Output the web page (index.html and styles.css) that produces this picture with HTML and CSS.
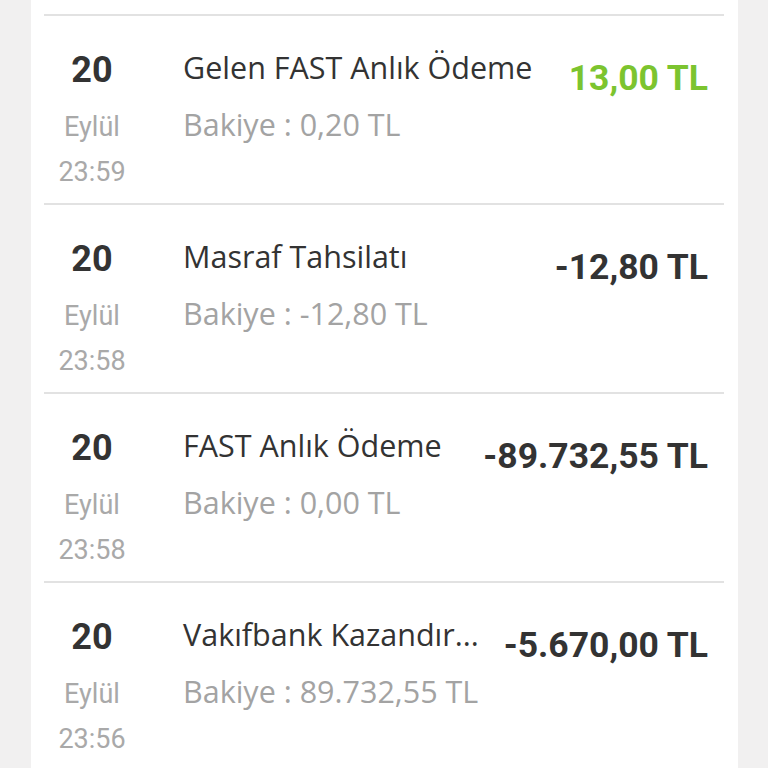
FILE: index.html
```html
<!DOCTYPE html>
<html lang="tr">
<head>
<meta charset="utf-8">
<link rel="stylesheet" href="styles.css">
</head>
<body>
<div class="card">
  <div class="stub"></div>
  <div class="row">
    <div class="date"><div class="day">20</div><div class="month">Eylül</div><div class="time">23:59</div></div>
    <div class="info"><div class="title">Gelen FAST Anlık Ödeme</div><div class="balance">Bakiye : 0,20 TL</div></div>
    <div class="amount positive">13,00 TL</div>
  </div>
  <div class="row">
    <div class="date"><div class="day">20</div><div class="month">Eylül</div><div class="time">23:58</div></div>
    <div class="info"><div class="title">Masraf Tahsilatı</div><div class="balance">Bakiye : -12,80 TL</div></div>
    <div class="amount">-12,80 TL</div>
  </div>
  <div class="row">
    <div class="date"><div class="day">20</div><div class="month">Eylül</div><div class="time">23:58</div></div>
    <div class="info"><div class="title">FAST Anlık Ödeme</div><div class="balance">Bakiye : 0,00 TL</div></div>
    <div class="amount">-89.732,55 TL</div>
  </div>
  <div class="row">
    <div class="date"><div class="day">20</div><div class="month">Eylül</div><div class="time">23:56</div></div>
    <div class="info"><div class="title">Vakıfbank Kazandır...</div><div class="balance">Bakiye : 89.732,55 TL</div></div>
    <div class="amount">-5.670,00 TL</div>
  </div>
</div>
</body>
</html>
```
FILE: styles.css
```css
html, body {
  margin: 0;
  padding: 0;
  background: #f1f0f0;
  height: 768px;
  overflow: hidden;
}
.card {
  margin: 0 30px 0 31px;
  background: #ffffff;
  padding: 0 14px 0 13px;
  height: 768px;
}
.stub {
  height: 14px;
}
.row {
  display: flex;
  align-items: flex-start;
  border-top: 2px solid #e2e2e2;
  height: 187px;
}
.date {
  width: 96px;
  flex: none;
  text-align: center;
  font-family: Roboto, "Liberation Sans", sans-serif;
  padding-top: 34px;
}
.day {
  font-size: 36px;
  font-weight: 700;
  line-height: 40px;
  color: #333333;
}
.month {
  font-size: 27px;
  line-height: 40px;
  color: #a9a9a9;
  margin-top: 17px;
}
.time {
  font-size: 27px;
  line-height: 40px;
  color: #a9a9a9;
  margin-top: 5px;
}
.info {
  flex: 1;
  margin-left: 43px;
  padding-top: 31px;
  font-family: "Open Sans", "Noto Sans", sans-serif;
  min-width: 0;
}
.title {
  font-size: 30.5px;
  line-height: 40px;
  color: #333333;
  white-space: nowrap;
}
.balance {
  font-size: 30.5px;
  line-height: 40px;
  color: #a3a3a3;
  margin-top: 17px;
  white-space: nowrap;
}
.amount {
  flex: none;
  padding-top: 42px;
  padding-right: 16px;
  font-family: Roboto, "Liberation Sans", sans-serif;
  font-size: 35.5px;
  font-weight: 700;
  line-height: 40px;
  color: #333333;
  white-space: nowrap;
}
.amount.positive {
  color: #7cc42f;
}
```
